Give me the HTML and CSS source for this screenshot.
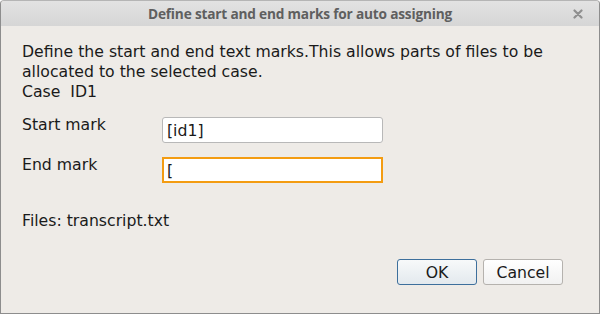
FILE: index.html
```html
<!DOCTYPE html>
<html lang="en">
<head>
    <meta charset="UTF-8">
    <title>Define start and end marks for auto assigning</title>
    <link rel="stylesheet" href="styles.css">
</head>
<body>
    <!-- 对话框窗口 -->
    <div class="window">
        <div class="titlebar">
            <span class="title">Define start and end marks for auto assigning</span>
            <svg class="close" width="10" height="10" viewBox="0 0 10 10">
                <path d="M1.5 1.5 L8.5 8.5 M8.5 1.5 L1.5 8.5" stroke="#8f8f8f" stroke-width="2.2" stroke-linecap="round"/>
            </svg>
        </div>
        <div class="content">
            <p class="intro">Define the start and end text marks.This allows parts of files to be allocated to the selected case.</p>
            <p class="case">Case&nbsp; ID1</p>
            <div class="row">
                <label class="label">Start mark</label>
                <input class="field" type="text" value="[id1]">
            </div>
            <div class="row">
                <label class="label">End mark</label>
                <input class="field focus" type="text" value="[">
            </div>
            <p class="files">Files: transcript.txt</p>
            <div class="buttons">
                <button class="btn ok">OK</button>
                <button class="btn">Cancel</button>
            </div>
        </div>
    </div>
</body>
</html>
```

FILE: styles.css
```css
*{
    margin: 0;
    padding: 0;
    box-sizing: border-box;
}
body{
    width: 600px;
    height: 314px;
    overflow: hidden;
    font-family: "DejaVu Sans", sans-serif;
    font-size: 15.7px;
    color: #1a1a1a;
}
.window{
    width: 600px;
    height: 314px;
    border: 1px solid #8d8d8d;
    border-top-color: #b5b5b5;
    border-radius: 4px 4px 0 0;
    background-color: #eeebe7;
    display: flex;
    flex-direction: column;
}
.titlebar{
    height: 25px;
    background: linear-gradient(#e2e2e2, #d6d6d6);
    border-radius: 4px 4px 0 0;
    display: flex;
    align-items: center;
    justify-content: center;
    position: relative;
}
.title{
    font-family: "Open Sans", sans-serif;
    font-weight: bold;
    font-size: 13.7px;
    letter-spacing: -0.2px;
    color: #5f5f5f;
}
/* 关闭按钮 */
.close{
    position: absolute;
    right: 16px;
    top: 8px;
}
.content{
    padding: 16px 21px 0 21px;
    line-height: 20px;
}
.intro{
    width: 550px;
}
.case{
    margin-bottom: 15px;
}
.row{
    display: flex;
    align-items: flex-start;
    height: 40px;
}
.label{
    width: 140px;
    line-height: 16px;
}
.field{
    width: 221px;
    height: 26px;
    border: 1px solid #b8b8b8;
    border-radius: 3px;
    background: #fff;
    font-family: "DejaVu Sans", sans-serif;
    font-size: 15.7px;
    color: #1a1a1a;
    padding: 0 4px;
    outline: none;
}
.field.focus{
    border: 2px solid #f39c12;
    border-radius: 0;
    padding: 0 3px;
}
.files{
    margin-top: 14px;
}
.buttons{
    display: flex;
    justify-content: flex-end;
    gap: 6px;
    margin-top: 28px;
    padding-right: 15px;
}
.btn{
    width: 80px;
    height: 26px;
    border: 1px solid #b5b2ae;
    border-radius: 3px;
    background: linear-gradient(#ffffff, #f1f1f1);
    font-family: "DejaVu Sans", sans-serif;
    font-size: 15.7px;
    color: #1a1a1a;
}
.btn.ok{
    border-color: #3d6f9c;
    background: linear-gradient(#f7f9fa, #e3e9ee);
}
```
